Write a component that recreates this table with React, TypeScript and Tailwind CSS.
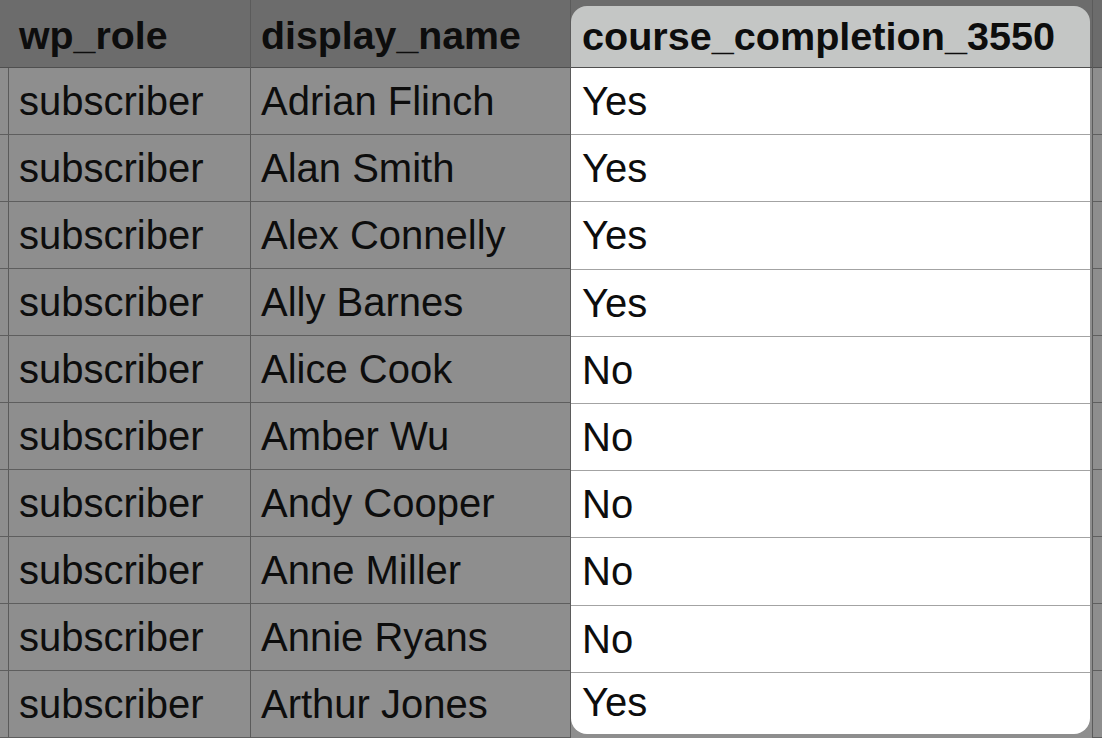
import React from "react";

const rows = [
  { role: "subscriber", name: "Adrian Flinch", done: "Yes" },
  { role: "subscriber", name: "Alan Smith", done: "Yes" },
  { role: "subscriber", name: "Alex Connelly", done: "Yes" },
  { role: "subscriber", name: "Ally Barnes", done: "Yes" },
  { role: "subscriber", name: "Alice Cook", done: "No" },
  { role: "subscriber", name: "Amber Wu", done: "No" },
  { role: "subscriber", name: "Andy Cooper", done: "No" },
  { role: "subscriber", name: "Anne Miller", done: "No" },
  { role: "subscriber", name: "Annie Ryans", done: "No" },
  { role: "subscriber", name: "Arthur Jones", done: "Yes" },
];

const GrayColumn = ({
  title,
  values,
  className,
}: {
  title?: string;
  values: string[];
  className: string;
}) => (
  <div className={`flex flex-col shrink-0 border-r border-[#5b5b5b] ${className}`}>
    <div className="h-[68px] bg-[#6c6c6c] border-b border-[#4f4f4f] flex items-center pl-[10px] pt-[4px] font-bold text-[39.3px]">
      {title}
    </div>
    {values.map((v, i) => (
      <div
        key={i}
        className="h-[67.2px] border-b border-[#5e5e5e] flex items-center pl-[10px]"
      >
        {v}
      </div>
    ))}
  </div>
);

export default function App() {
  return (
    <div
      className="w-[1102px] h-[738px] overflow-hidden bg-[#8e8e8e] flex text-[40px] leading-none text-[#0d0d0d]"
      style={{ fontFamily: '"Liberation Sans", Arial, sans-serif' }}
    >
      <GrayColumn className="w-[9px]" values={rows.map(() => "")} />
      <GrayColumn
        className="w-[242px]"
        title="wp_role"
        values={rows.map((r) => r.role)}
      />
      <GrayColumn
        className="w-[320px]"
        title="display_name"
        values={rows.map((r) => r.name)}
      />

      {/* Highlighted column */}
      <div className="flex flex-col shrink-0 w-[522px] border-r border-[#5b5b5b]">
        <div className="h-[68px] bg-[#6c6c6c] pt-[6px] pr-[2px] border-b border-[#4f4f4f]">
          <div className="h-full bg-[#c4c6c5] rounded-t-[16px] flex items-center pl-[11px] font-bold text-[39.6px]">
            course_completion_3550
          </div>
        </div>
        <div className="pr-[2px] flex flex-col">
          {rows.map((r, i) =>
            i < rows.length - 1 ? (
              <div
                key={i}
                className="h-[67.2px] bg-white border-b border-[#a3a3a3] flex items-center pl-[11px]"
              >
                {r.done}
              </div>
            ) : (
              <div
                key={i}
                className="h-[61px] bg-white rounded-b-[16px] flex items-center pl-[11px] pb-[6px] pt-[4px]"
              >
                {r.done}
              </div>
            )
          )}
        </div>
      </div>

      <div className="flex-1 flex flex-col">
        <div className="h-[68px] bg-[#6c6c6c] border-b border-[#4f4f4f]" />
        {rows.map((_, i) => (
          <div key={i} className="h-[67.2px] border-b border-[#5e5e5e]" />
        ))}
      </div>
    </div>
  );
}
